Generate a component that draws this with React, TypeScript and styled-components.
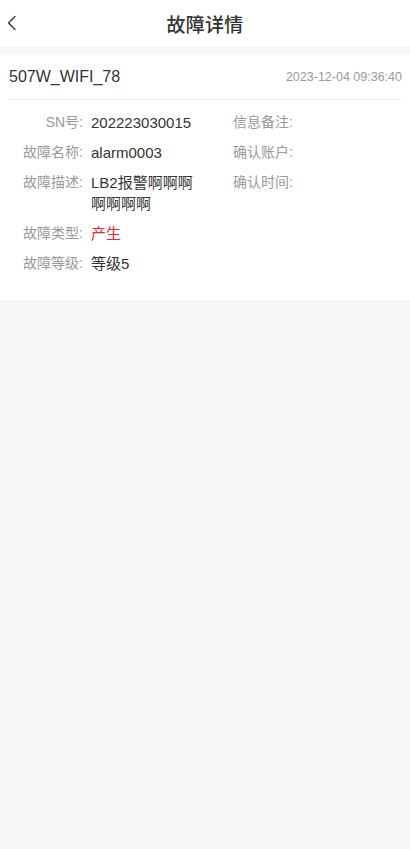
import * as React from 'react'
import styled, { createGlobalStyle } from 'styled-components'

interface IField {
  label: string
  value?: string
  danger?: boolean
}

const leftFields: IField[] = [
  { label: 'SN号:', value: '202223030015' },
  { label: '故障名称:', value: 'alarm0003' },
  { label: '故障描述:', value: 'LB2报警啊啊啊啊啊啊啊' },
  { label: '故障类型:', value: '产生', danger: true },
  { label: '故障等级:', value: '等级5' },
]

const rightFields: IField[] = [
  { label: '信息备注:' },
  { label: '确认账户:' },
  { label: '确认时间:' },
]

export default function App() {
  return (
    <Page>
      <GlobalStyle />
      <Header>
        <BackButton aria-label="back">
          <svg width="10" height="16" viewBox="0 0 10 16" fill="none">
            <path d="M8 1.5L1.6 8L8 14.5" stroke="#333" strokeWidth="1.3" strokeLinecap="round" strokeLinejoin="round" />
          </svg>
        </BackButton>
        <Title>故障详情</Title>
      </Header>
      <Card>
        <CardHead>
          <DeviceName>507W_WIFI_78</DeviceName>
          <Time>2023-12-04 09:36:40</Time>
        </CardHead>
        <Details>
          <Column $wide>
            {leftFields.map(f => (
              <Field key={f.label}>
                <Label>{f.label}</Label>
                <Value $danger={f.danger}>{f.value}</Value>
              </Field>
            ))}
          </Column>
          <Column>
            {rightFields.map(f => (
              <Field key={f.label}>
                <Label $left>{f.label}</Label>
                <Value>{f.value}</Value>
              </Field>
            ))}
          </Column>
        </Details>
      </Card>
    </Page>
  )
}

const GlobalStyle = createGlobalStyle`
  html, body {
    margin: 0;
    padding: 0;
    background: #f6f7f9;
  }
  body {
    font-family: "Liberation Sans", Arial, "Noto Sans CJK SC", sans-serif;
    color: #333;
  }
  * {
    box-sizing: border-box;
  }
`
const Page = styled.div`
  min-height: 849px;
  background: #f6f7f9;
`
const Header = styled.header`
  position: relative;
  display: flex;
  align-items: center;
  justify-content: center;
  height: 47px;
  background: #fff;
`
const BackButton = styled.button`
  position: absolute;
  left: 7px;
  top: 15px;
  display: flex;
  padding: 0;
  border: 0;
  background: transparent;
  cursor: pointer;
`
const Title = styled.h1`
  margin: 0;
  font-size: 19px;
  font-weight: 500;
  color: #333;
  letter-spacing: 0.3px;
`
const Card = styled.section`
  margin-top: 7px;
  padding: 0 8px 26px 9px;
  background: #fff;
`
const CardHead = styled.div`
  display: flex;
  align-items: center;
  justify-content: space-between;
  height: 46px;
  border-bottom: 1px solid #f0f0f0;
`
const DeviceName = styled.span`
  font-size: 16px;
  color: #333;
`
const Time = styled.span`
  font-size: 12.5px;
  color: #999;
`
const Details = styled.div`
  display: flex;
  padding-top: 12px;
`
const Column = styled.div<{ $wide?: boolean }>`
  display: flex;
  flex-direction: column;
  gap: 9px;
  width: ${({ $wide }) => ($wide ? '224px' : 'auto')};
  padding-right: ${({ $wide }) => ($wide ? '34px' : '0')};
  flex: ${({ $wide }) => ($wide ? 'none' : '1')};
`
const Field = styled.div`
  display: flex;
  gap: 8px;
  line-height: 21px;
`
const Label = styled.span<{ $left?: boolean }>`
  flex: none;
  width: ${({ $left }) => ($left ? 'auto' : '74px')};
  text-align: ${({ $left }) => ($left ? 'left' : 'right')};
  font-size: 14px;
  color: #999;
`
const Value = styled.span<{ $danger?: boolean }>`
  flex: 1;
  min-width: 0;
  font-size: 15px;
  color: ${({ $danger }) => ($danger ? '#f5222d' : '#333')};
  word-break: break-all;
`
